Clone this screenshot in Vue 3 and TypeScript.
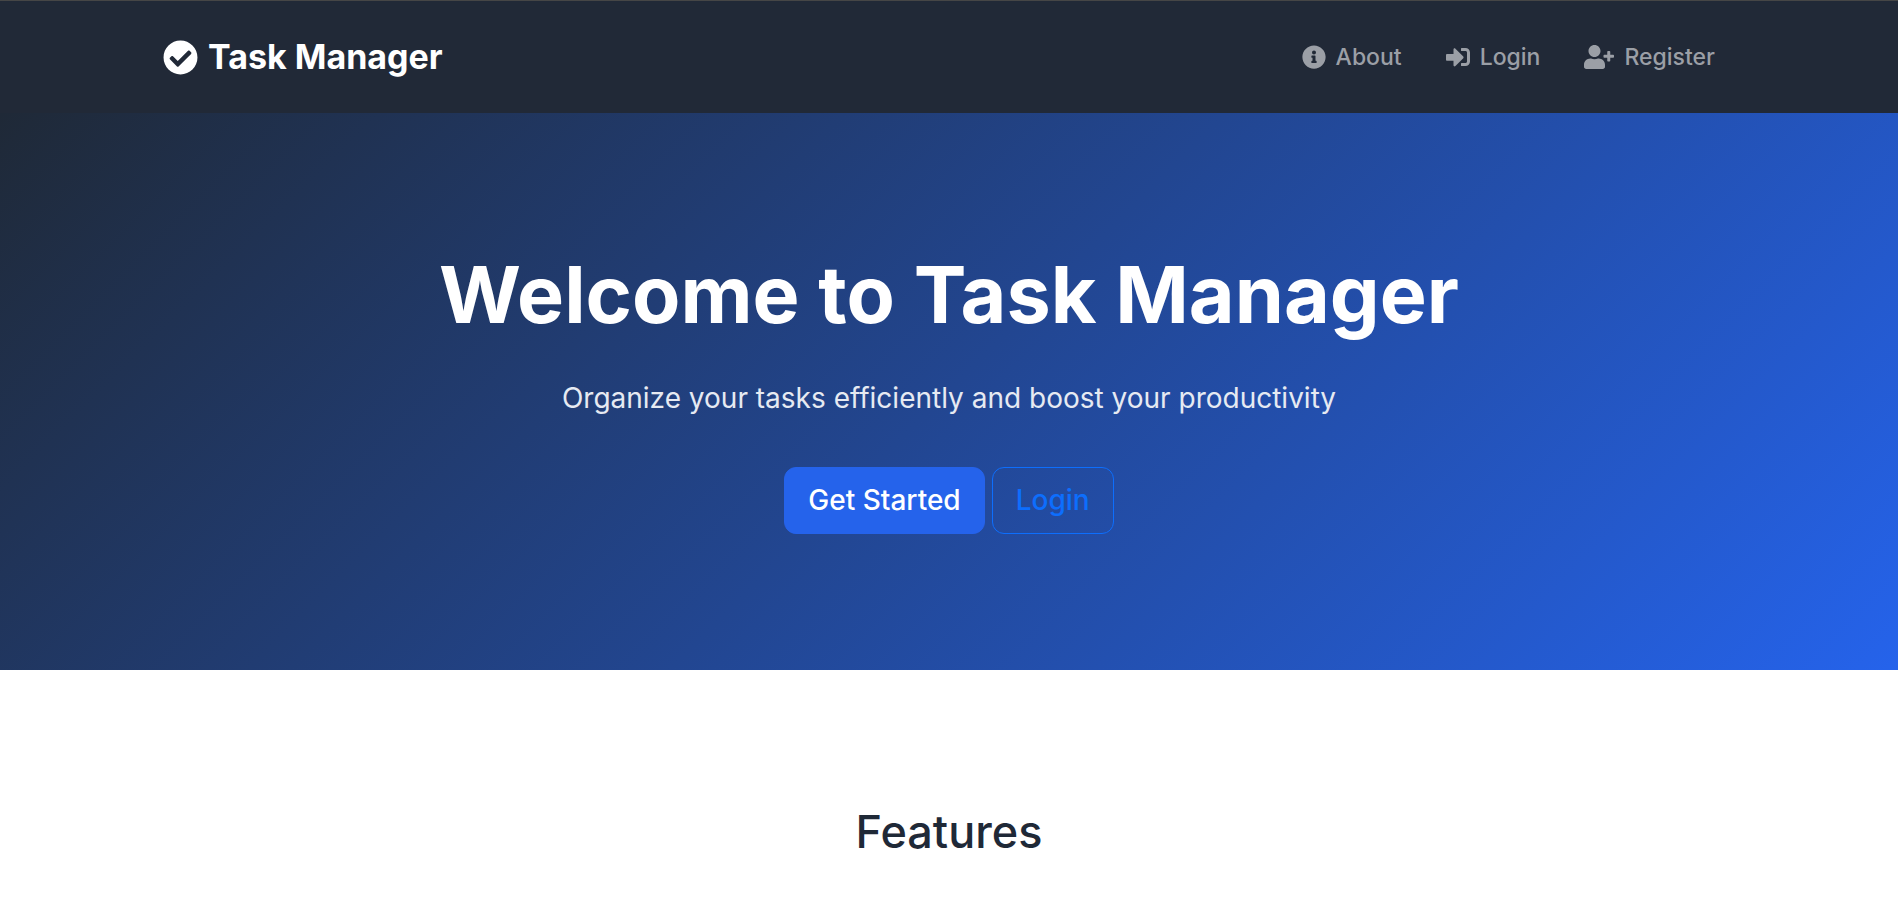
<script setup lang="ts">
interface NavItem {
  label: string
  href: string
  viewBox: string
  wide?: boolean
  path: string
}

const navItems: NavItem[] = [
  {
    label: 'About',
    href: '#about',
    viewBox: '0 0 512 512',
    path: 'M256 8C119.043 8 8 119.083 8 256c0 136.997 111.043 248 248 248s248-111.003 248-248C504 119.083 392.957 8 256 8zm0 110c23.196 0 42 18.804 42 42s-18.804 42-42 42-42-18.804-42-42 18.804-42 42-42zm56 254c0 6.627-5.373 12-12 12h-88c-6.627 0-12-5.373-12-12v-24c0-6.627 5.373-12 12-12h12v-64h-12c-6.627 0-12-5.373-12-12v-24c0-6.627 5.373-12 12-12h64c6.627 0 12 5.373 12 12v100h12c6.627 0 12 5.373 12 12v24z',
  },
  {
    label: 'Login',
    href: '#login',
    viewBox: '0 0 512 512',
    path: 'M416 448h-84c-6.6 0-12-5.4-12-12v-40c0-6.6 5.4-12 12-12h84c17.7 0 32-14.3 32-32V160c0-17.7-14.3-32-32-32h-84c-6.6 0-12-5.4-12-12V76c0-6.6 5.4-12 12-12h84c53 0 96 43 96 96v192c0 53-43 96-96 96zm-47-201L201 79c-15-15-41-4.5-41 17v96H24c-13.3 0-24 10.7-24 24v96c0 13.3 10.7 24 24 24h136v96c0 21.5 26 32 41 17l168-168c9.3-9.4 9.3-24.6 0-34z',
  },
  {
    label: 'Register',
    href: '#register',
    viewBox: '0 0 640 512',
    wide: true,
    path: 'M624 208h-64v-64c0-8.8-7.2-16-16-16h-32c-8.8 0-16 7.2-16 16v64h-64c-8.8 0-16 7.2-16 16v32c0 8.8 7.2 16 16 16h64v64c0 8.8 7.2 16 16 16h32c8.8 0 16-7.2 16-16v-64h64c8.8 0 16-7.2 16-16v-32c0-8.8-7.2-16-16-16zm-400 48c70.7 0 128-57.3 128-128S294.7 0 224 0 96 57.3 96 128s57.3 128 128 128zm89.6 32h-16.7c-22.2 10.2-46.9 16-72.9 16s-50.6-5.8-72.9-16h-16.7C60.2 288 0 348.2 0 422.4V464c0 26.5 21.5 48 48 48h352c26.5 0 48-21.5 48-48v-41.6c0-74.2-60.2-134.4-134.4-134.4z',
  },
]
</script>

<template>
  <div class="page">
    <header class="navbar">
      <div class="bar">
        <a class="brand" href="#home">
          <svg class="brand-icon" viewBox="0 0 512 512" aria-hidden="true">
            <path
              d="M504 256c0 136.967-111.033 248-248 248S8 392.967 8 256 119.033 8 256 8s248 111.033 248 248zM227.314 387.314l184-184c6.248-6.248 6.248-16.379 0-22.627l-22.627-22.627c-6.248-6.249-16.379-6.249-22.628 0L216 308.118l-70.059-70.059c-6.248-6.248-16.379-6.248-22.628 0l-22.627 22.627c-6.248 6.248-6.248 16.379 0 22.627l104 104c6.249 6.249 16.379 6.249 22.628.001z"
            />
          </svg>
          <span>Task Manager</span>
        </a>
        <nav class="links" aria-label="Main">
          <a v-for="item in navItems" :key="item.label" class="link" :href="item.href">
            <svg class="link-icon" :class="{ wide: item.wide }" :viewBox="item.viewBox" aria-hidden="true">
              <path :d="item.path" />
            </svg>
            <span>{{ item.label }}</span>
          </a>
        </nav>
      </div>
    </header>

    <main>
      <section class="hero">
        <h1 class="title">Welcome to Task Manager</h1>
        <p class="lead">Organize your tasks efficiently and boost your productivity</p>
        <div class="actions">
          <a class="btn primary" href="#register">Get Started</a>
          <a class="btn outline" href="#login">Login</a>
        </div>
      </section>

      <section class="features">
        <h2 class="heading">Features</h2>
      </section>
    </main>
  </div>
</template>

<style>
body {
  margin: 0;
  background: #ffffff;
}
</style>

<style scoped>
.page {
  font-family: Inter, 'Liberation Sans', sans-serif;
  color: #1f2937;
}

a {
  text-decoration: none;
}

svg {
  display: block;
  fill: currentColor;
}

.navbar {
  background: #212937;
  border-top: 1px solid #464646;
}

.bar {
  display: flex;
  align-items: center;
  justify-content: space-between;
  max-width: 1572px;
  margin: 0 auto;
  padding: 35px 0;
}

.brand {
  display: flex;
  align-items: center;
  gap: 10px;
  color: #ffffff;
  font-size: 34px;
  font-weight: 700;
  line-height: 42px;
}

.brand-icon {
  width: 35px;
  height: 35px;
}

.links {
  display: flex;
}

.link {
  display: flex;
  align-items: center;
  gap: 10px;
  padding: 0 20px 0 24px;
  color: #9b9fa6;
  font-size: 23px;
  font-weight: 500;
  line-height: 42px;
}

.link-icon {
  width: 24px;
  height: 24px;
}

.link-icon.wide {
  width: 30px;
}

.hero {
  padding: 133px 24px 136px;
  background: linear-gradient(135deg, #1f2937 0%, #2563eb 100%);
  text-align: center;
}

.title {
  margin: 0;
  color: #ffffff;
  font-size: 79px;
  font-weight: 700;
  line-height: 96px;
}

.lead {
  margin: 35px 0 48px;
  color: #e6eaf2;
  font-size: 28px;
  line-height: 42px;
}

.actions {
  display: flex;
  justify-content: center;
  gap: 7px;
}

.btn {
  padding: 11px 23px;
  border: 1px solid transparent;
  border-radius: 12px;
  font-size: 28px;
  font-weight: 500;
  line-height: 43px;
}

.primary {
  border-color: #2563eb;
  background: #2563eb;
  color: #ffffff;
}

.outline {
  border-color: #0d6efd;
  color: #0d6efd;
}

.features {
  padding: 135px 24px 40px;
}

.heading {
  margin: 0;
  font-size: 45px;
  font-weight: 500;
  line-height: 54px;
  text-align: center;
}
</style>
